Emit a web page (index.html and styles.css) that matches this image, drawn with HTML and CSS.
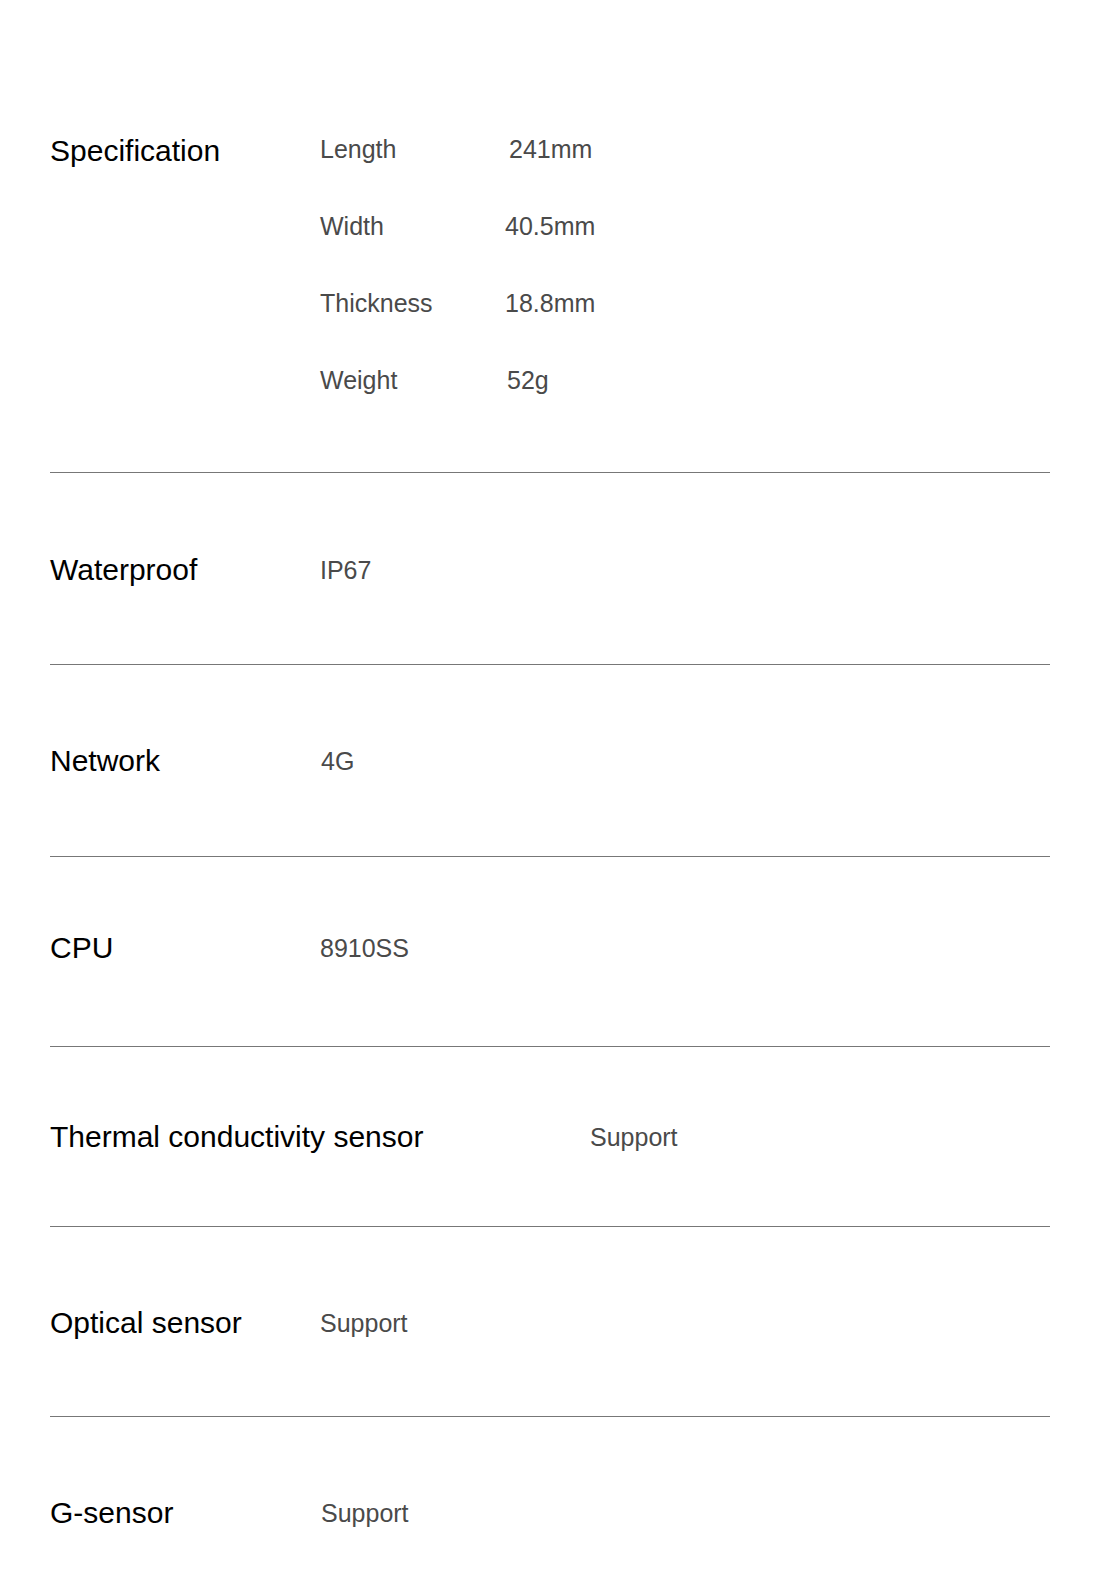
FILE: index.html
```html
<!DOCTYPE html>
<html lang="en">
<head>
<meta charset="utf-8">
<title>Specification</title>
<link rel="stylesheet" href="styles.css">
</head>
<body>
<main class="specs">
  <section class="row row-spec">
    <div class="label">Specification</div>
    <div class="dims">
      <div class="dim-name">Length</div><div class="dim-val shift">241mm</div>
      <div class="dim-name">Width</div><div class="dim-val">40.5mm</div>
      <div class="dim-name">Thickness</div><div class="dim-val">18.8mm</div>
      <div class="dim-name">Weight</div><div class="dim-val shift-s">52g</div>
    </div>
  </section>
  <section class="row row-a">
    <div class="label">Waterproof</div>
    <div class="value">IP67</div>
  </section>
  <section class="row row-b">
    <div class="label">Network</div>
    <div class="value nudge">4G</div>
  </section>
  <section class="row row-c">
    <div class="label">CPU</div>
    <div class="value">8910SS</div>
  </section>
  <section class="row row-d row-wide">
    <div class="label">Thermal conductivity sensor</div>
    <div class="value">Support</div>
  </section>
  <section class="row row-e">
    <div class="label">Optical sensor</div>
    <div class="value">Support</div>
  </section>
  <section class="row row-f row-last">
    <div class="label">G-sensor</div>
    <div class="value nudge">Support</div>
  </section>
</main>
</body>
</html>
```
FILE: styles.css
```css
html, body {
  margin: 0;
  padding: 0;
  background: #fff;
}

body {
  font-family: "Liberation Sans", Arial, sans-serif;
}

.specs {
  width: 1000px;
  margin: 0 50px;
}

.row {
  display: grid;
  grid-template-columns: 270px 1fr;
  align-items: center;
  border-bottom: 1px solid #777;
}

.row-wide {
  grid-template-columns: 540px 1fr;
}

.row-last {
  border-bottom: none;
}

.label {
  font-size: 30px;
  line-height: 34px;
  color: #000;
}

.value,
.dim-name,
.dim-val {
  font-size: 25px;
  line-height: 30px;
  color: #4a4a4a;
}

.nudge {
  padding-left: 1px;
}

.row-spec {
  align-items: start;
  padding: 134px 0 77px;
}

.dims {
  display: grid;
  grid-template-columns: 185px auto;
  row-gap: 47px;
  justify-content: start;
}

.dim-val.shift {
  padding-left: 4px;
}

.dim-val.shift-s {
  padding-left: 2px;
}

.row-a { padding: 80px 0 77px; }
.row-b { padding: 79px 0 78px; }
.row-c { padding: 74px 0 81px; }
.row-d { padding: 73px 0 72px; }
.row-e { padding: 79px 0 76px; }
.row-f { padding: 79px 0 40px; }
```
